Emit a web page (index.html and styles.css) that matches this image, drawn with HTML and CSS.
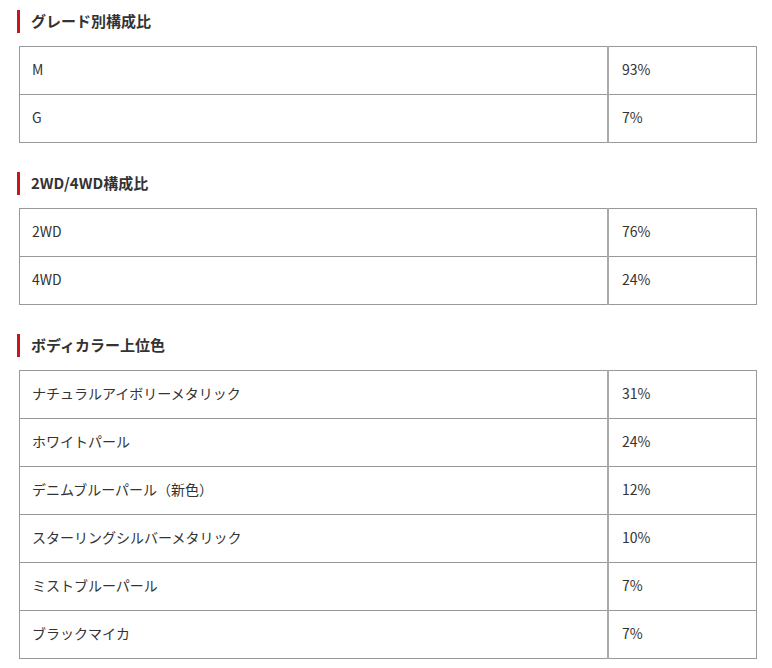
FILE: index.html
```html
<!DOCTYPE html>
<html lang="ja">
<head>
<meta charset="utf-8">
<link rel="stylesheet" href="styles.css">
</head>
<body>
<div class="page">
  <section class="block">
    <h2 class="heading">グレード別構成比</h2>
    <table class="data">
      <tr><td class="name">M</td><td class="val">93%</td></tr>
      <tr><td class="name">G</td><td class="val">7%</td></tr>
    </table>
  </section>
  <section class="block">
    <h2 class="heading">2WD/4WD構成比</h2>
    <table class="data">
      <tr><td class="name">2WD</td><td class="val">76%</td></tr>
      <tr><td class="name">4WD</td><td class="val">24%</td></tr>
    </table>
  </section>
  <section class="block">
    <h2 class="heading">ボディカラー上位色</h2>
    <table class="data">
      <tr><td class="name">ナチュラルアイボリーメタリック</td><td class="val">31%</td></tr>
      <tr><td class="name">ホワイトパール</td><td class="val">24%</td></tr>
      <tr><td class="name">デニムブルーパール（新色）</td><td class="val">12%</td></tr>
      <tr><td class="name">スターリングシルバーメタリック</td><td class="val">10%</td></tr>
      <tr><td class="name">ミストブルーパール</td><td class="val">7%</td></tr>
      <tr><td class="name">ブラックマイカ</td><td class="val">7%</td></tr>
    </table>
  </section>
</div>
</body>
</html>
```

FILE: styles.css
```css
html, body {
  margin: 0;
  padding: 0;
  background: #fff;
}
body {
  font-family: "Noto Sans CJK JP", "Noto Sans", sans-serif;
  color: #333;
}
.page {
  padding: 10px 15px 0 19px;
}
.block {
  margin-bottom: 29px;
}
.heading {
  margin: 0 0 13px -2px;
  border-left: 3px solid #c8161d;
  padding-left: 11px;
  padding-bottom: 1px;
  font-size: 15px;
  font-weight: bold;
  line-height: 22px;
  color: #333;
}
.data {
  width: 738px;
  border-collapse: collapse;
  border: 1px solid #999;
}
.data td {
  height: 44px;
  padding: 0 13px 3px 12px;
  font-size: 14px;
  line-height: 20px;
  border-bottom: 1px solid #999;
  color: #333;
}
.data td.name {
  border-right: 2px solid #aaa;
}
.data td.val {
  width: 121px;
  padding-left: 13px;
}
```
